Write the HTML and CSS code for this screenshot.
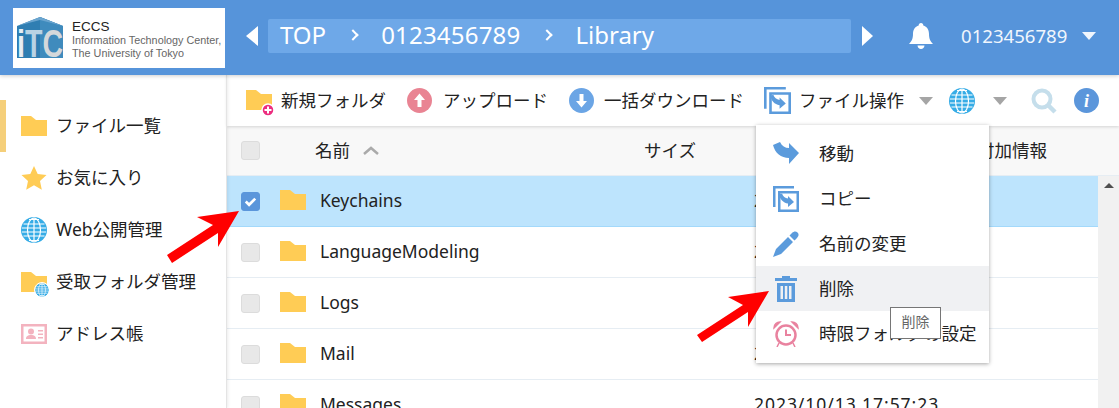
FILE: index.html
```html
<!DOCTYPE html>
<html lang="ja">
<head>
    <meta charset="UTF-8">
    <title>ECCS Cloud Storage</title>
    <link rel="stylesheet" href="styles.css">
</head>
<body>
    <svg class="defs" aria-hidden="true">
        <symbol id="folder" viewBox="0 0 26 20"><path d="M0 0h10l5 4h11v16H0z" fill="#ffcc55"/></symbol>
        <symbol id="globe" viewBox="0 0 26 26">
            <circle cx="13" cy="13" r="13" fill="#36ace6"/>
            <g fill="none" stroke="#fff" stroke-width="1.200">
                <ellipse cx="13" cy="13" rx="6.500" ry="12"/>
                <path d="M13 1v24M8 2.500h10M2.500 7h21M1 11h24M1 15h24M2.500 19h21M8 23.500h10"/>
            </g>
        </symbol>
        <symbol id="copy" viewBox="0 0 26 26">
            <path d="M0 0h21v2.500H2.500V21H0z" fill="#5b9bdc"/>
            <path d="M5 5h21v21H5zM7.500 7.500v16h16v-16z" fill="#5b9bdc" fill-rule="evenodd"/>
            <path d="M6 8.500l3-1c1 3 3 4.500 6 5V10l6 6-6 5v-3.500C10 17 7 13 6 8.500z" fill="#5b9bdc"/>
        </symbol>
    </svg>

    <header class="topbar">
        <div class="logo">
            <svg class="logo-mark" viewBox="0 -4 46 52">
                <path d="M0 9 23 0l23 9v32H0z" fill="#2f7eb2"/>
                <path d="M23 0l23 9v32H23z" fill="#3f8bbd"/>
                <path d="M0 9 23 3l23 6L23 0z" fill="#6ba5cf"/>
                <text x="0" y="40" class="logo-itc" textLength="46" lengthAdjust="spacingAndGlyphs"><tspan class="itc-i">i</tspan><tspan class="itc-t">T</tspan><tspan class="itc-c">C</tspan></text>
            </svg>
            <div class="logo-text">
                <div class="logo-name">ECCS</div>
                <div>Information Technology Center,</div>
                <div>The University of Tokyo</div>
            </div>
        </div>
        <span class="crumb-arrow crumb-left"></span>
        <nav class="crumbs">
            <span>TOP</span><i class="chev"></i>
            <span class="crumb-num">0123456789</span><i class="chev"></i>
            <span>Library</span>
        </nav>
        <span class="crumb-arrow crumb-right"></span>
        <svg class="bell" viewBox="0 0 24 26"><path d="M12 0c1.500 0 2.300 1 2.300 2.400C18 3.400 20 6.500 20 11c0 5 1.500 7.500 4 10H0c2.500-2.500 4-5 4-10 0-4.500 2-7.600 5.700-8.600C9.700 1 10.500 0 12 0zM8.500 22.500h7C15.300 24.800 13.900 26 12 26s-3.300-1.200-3.500-3.500z" fill="#fff"/></svg>
        <span class="user">0123456789</span>
        <span class="user-caret"></span>
    </header>

    <div class="main">
        <aside class="sidebar">
            <a class="side-item active"><svg class="side-icon"><use href="#folder"/></svg><span class="label">ファイル一覧</span></a>
            <a class="side-item">
                <svg class="side-icon" viewBox="0 0 26 26"><path d="m13 1 3.700 8 8.800 1-6.500 6 1.800 8.700L13 20.300 5.200 24.700 7 16 .5 10l8.800-1z" fill="#ffcc55"/></svg><span class="label">お気に入り</span>
            </a>
            <a class="side-item"><svg class="side-icon"><use href="#globe"/></svg><span class="label">Web公開管理</span></a>
            <a class="side-item">
                <span class="side-icon stack">
                    <svg class="side-icon"><use href="#folder"/></svg>
                    <svg class="mini-globe"><use href="#globe"/></svg>
                </span><span class="label">受取フォルダ管理</span>
            </a>
            <a class="side-item">
                <svg class="side-icon" viewBox="0 0 26 20">
                    <path d="M0 0h26v20H0zM2.500 2.500v15h21v-15z" fill="#f3b3bf" fill-rule="evenodd"/>
                    <circle cx="10" cy="7.500" r="3" fill="#f3b3bf"/>
                    <path d="M5 15c0-3 2-4 5-4s5 1 5 4zM17 6h5v1.500h-5zM17 9.500h5V11h-5zM17 13h5v1.500h-5z" fill="#f3b3bf"/>
                </svg><span class="label">アドレス帳</span>
            </a>
        </aside>

        <section class="content">
            <div class="toolbar">
                <a class="tool tool-new">
                    <span class="tool-folder">
                        <svg class="tool-folder-icon"><use href="#folder"/></svg>
                        <svg class="plus" viewBox="0 0 14 14"><circle cx="7" cy="7" r="6" fill="#ec2d7f" stroke="#fff" stroke-width="1.500"/><path d="M3.500 7h7M7 3.500v7" stroke="#fff" stroke-width="2"/></svg>
                    </span><span class="label">新規フォルダ</span>
                </a>
                <a class="tool tool-up">
                    <svg class="round-icon" viewBox="0 0 25 25"><circle cx="12.500" cy="12.500" r="12.500" fill="#e98493"/><path d="M12.500 5.500 18 12h-3.500v7h-4v-7H7z" fill="#fff"/></svg><span class="label">アップロード</span>
                </a>
                <a class="tool tool-down">
                    <svg class="round-icon" viewBox="0 0 25 25"><circle cx="12.500" cy="12.500" r="12.500" fill="#6ba5e5"/><path d="M12.500 19.500 18 13h-3.500V6h-4v7H7z" fill="#fff"/></svg><span class="label">一括ダウンロード</span>
                </a>
                <a class="tool tool-ops"><svg class="copy-icon"><use href="#copy"/></svg><span class="label">ファイル操作</span></a>
                <span class="caret caret-ops"></span>
                <svg class="tool-globe"><use href="#globe"/></svg>
                <span class="caret caret-globe"></span>
                <svg class="tool-search" viewBox="0 0 26 26"><circle cx="11" cy="11" r="8.500" fill="none" stroke="#c5deeb" stroke-width="4"/><path d="m17 17 7 7" stroke="#c5deeb" stroke-width="4.500"/></svg>
                <svg class="tool-info" viewBox="0 0 25 25"><circle cx="12.500" cy="12.500" r="12.500" fill="#5b96db"/><text x="12.500" y="18.500" class="info-i">i</text></svg>
            </div>

            <div class="table-head">
                <span class="check"></span>
                <span class="head-name label">名前</span>
                <svg class="sort" viewBox="0 0 16 9"><path d="M1 8l7-6 7 6" fill="none" stroke="#aaa" stroke-width="2.500"/></svg>
                <span class="head-size label">サイズ</span>
                <span class="head-date label"></span>
                <span class="head-extra label">付加情報</span>
            </div>

            <div class="table-body">
                <div class="rows">
                    <div class="row selected">
                        <span class="check checked"><svg viewBox="0 0 18 18"><path d="m4 9 3.500 3.500L14 6" fill="none" stroke="#fff" stroke-width="2.800"/></svg></span>
                        <svg class="row-folder"><use href="#folder"/></svg>
                        <span class="row-name label">Keychains</span>
                        <span class="row-date">2023/10/13 17:57:23</span>
                    </div>
                    <div class="row">
                        <span class="check"></span>
                        <svg class="row-folder"><use href="#folder"/></svg>
                        <span class="row-name label">LanguageModeling</span>
                        <span class="row-date">2023/10/13 17:57:23</span>
                    </div>
                    <div class="row">
                        <span class="check"></span>
                        <svg class="row-folder"><use href="#folder"/></svg>
                        <span class="row-name label">Logs</span>
                        <span class="row-date">2023/10/13 17:57:23</span>
                    </div>
                    <div class="row">
                        <span class="check"></span>
                        <svg class="row-folder"><use href="#folder"/></svg>
                        <span class="row-name label">Mail</span>
                        <span class="row-date">2023/10/13 17:57:23</span>
                    </div>
                    <div class="row">
                        <span class="check"></span>
                        <svg class="row-folder"><use href="#folder"/></svg>
                        <span class="row-name label">Messages</span>
                        <span class="row-date">2023/10/13 17:57:23</span>
                    </div>
                </div>
                <div class="scrollbar"><span class="scroll-up"></span></div>
            </div>
        </section>
    </div>

    <ul class="menu">
        <li class="menu-item">
            <svg class="menu-icon" viewBox="0 0 26 26"><path d="M0 4l7-3c2 4 5 6 9 6V2l10 10-10 11v-6C8 17 2 12 0 4z" fill="#5b9bdc"/></svg><span class="label">移動</span>
        </li>
        <li class="menu-item"><svg class="menu-icon"><use href="#copy"/></svg><span class="label">コピー</span></li>
        <li class="menu-item">
            <svg class="menu-icon" viewBox="0 0 26 26"><path d="M0 26l3-8L15 6l5 5L8 23zM16.500 4.500 19 2c2-2 4-2 5.500-.5S26 5 24 7l-2.500 2.500z" fill="#5b9bdc"/></svg><span class="label">名前の変更</span>
        </li>
        <li class="menu-item hover">
            <svg class="menu-icon" viewBox="-2 0 26 26"><path d="M7 0h8v2h7v3H0V2h7zM2 7h18v19H2zM5.500 10v13H8V10zM9.800 10v13h2.500V10zM14 10v13h2.500V10z" fill="#5b9bdc" fill-rule="evenodd"/></svg><span class="label">削除</span>
        </li>
        <li class="menu-item">
            <svg class="menu-icon" viewBox="0 0 26 26">
                <circle cx="13" cy="14" r="9.500" fill="none" stroke="#e9829f" stroke-width="2.500"/>
                <path d="M13 8.500V14h5" fill="none" stroke="#e9829f" stroke-width="2"/>
                <path d="M1 7c0-4 3-6 6-6zM25 7c0-4-3-6-6-6zM6 22l-2 4M20 22l2 4" fill="#e9829f" stroke="#e9829f" stroke-width="1.500"/>
            </svg><span class="label">時限フォルダの設定</span>
        </li>
    </ul>
    <div class="tooltip">削除</div>

    <svg class="red-arrow arrow-check" viewBox="0 0 80 60"><path d="M73 1 31 7l16 8L1 45l5 8 46-30 0 14z" fill="#f00"/></svg>
    <svg class="red-arrow arrow-delete" viewBox="0 0 80 60"><path d="M73 1 32 7l15 8L1 45l5 7 46-30 0 15z" fill="#f00"/></svg>
</body>
</html>
```

FILE: styles.css
```css
* {
    box-sizing: border-box;
}
html, body {
    height: 100%;
}
body {
    margin: 0;
    overflow: hidden;
    background-color: #fff;
    color: #222;
    font-family: "Noto Sans", "Noto Sans CJK JP", sans-serif;
    font-size: 17.5px;
}
.defs {
    width: 0;
    height: 0;
    display: block;
}
/* the text sits a little above the middle of its row */
.label {
    margin-bottom: 3px;
}

/* top bar */
.topbar {
    display: flex;
    align-items: center;
    height: 75px;
    background-color: #5694da;
    color: #fff;
    padding-left: 13px;
    padding-bottom: 4px;
    position: relative;
    z-index: 2;
    box-shadow: 0 1px 4px rgba(0, 0, 0, 0.2);
}
.logo {
    display: flex;
    align-items: center;
    width: 212px;
    height: 60px;
    background-color: #fff;
    padding-left: 4px;
    margin-top: 4px;
    color: #666;
    font-family: "Liberation Sans", sans-serif;
    font-size: 10.8px;
    line-height: 13px;
}
.logo-mark {
    width: 46px;
    height: 52px;
    flex: none;
    margin-top: 2px;
}
.logo-itc {
    font-family: "Liberation Sans", sans-serif;
    font-size: 39px;
    font-weight: bold;
}
.itc-i {
    fill: #e8eef2;
}
.itc-t {
    fill: #b9d3e4;
}
.itc-c {
    fill: #d4d8db;
}
.logo-text {
    margin-left: 9px;
    margin-top: 3px;
    white-space: nowrap;
}
.logo-name {
    color: #222;
    font-size: 13.5px;
    line-height: 15px;
}
.crumb-arrow {
    width: 0;
    height: 0;
    border-top: 10px solid transparent;
    border-bottom: 10px solid transparent;
}
.crumb-left {
    margin-left: 21px;
    border-right: 12px solid #fff;
}
.crumb-right {
    margin-left: 11px;
    border-left: 11px solid #fff;
}
.crumbs {
    display: flex;
    align-items: center;
    width: 583px;
    height: 34px;
    margin-left: 10px;
    padding-left: 12px;
    padding-bottom: 2px;
    background-color: #6ea8e8;
    border-radius: 2px;
    font-size: 24px;
}
.crumb-num {
    letter-spacing: 0.2px;
}
.chev {
    width: 8px;
    height: 8px;
    margin: 0 24px 0 23px;
    border-top: 2px solid #fff;
    border-right: 2px solid #fff;
    transform: rotate(45deg);
}
.bell {
    width: 24px;
    height: 26px;
    margin-left: 36px;
}
.user {
    margin-left: 28px;
    font-size: 18.6px;
    color: #f0f6fd;
}
.user-caret {
    width: 0;
    height: 0;
    margin-left: 15px;
    border-left: 7px solid transparent;
    border-right: 7px solid transparent;
    border-top: 8px solid #f0f6fd;
}

/* page below the bar */
.main {
    display: flex;
    height: 333px;
}
.sidebar {
    width: 227px;
    flex: none;
    padding-top: 25px;
    border-right: 1px solid #e4e4e4;
    box-shadow: 1px 0 3px rgba(0, 0, 0, 0.08);
    position: relative;
    z-index: 1;
}
.side-item {
    display: flex;
    align-items: center;
    height: 52px;
    padding-left: 21px;
}
.side-item.active {
    padding-left: 15px;
    border-left: 6px solid #f5cf7a;
}
.side-icon {
    width: 26px;
    height: 26px;
    margin-right: 9px;
    flex: none;
}
.stack {
    position: relative;
    display: block;
}
.stack .side-icon {
    display: block;
}
.mini-globe {
    position: absolute;
    right: -2px;
    bottom: -2px;
    width: 14px;
    height: 14px;
    border-radius: 50%;
    background-color: #fff;
    outline: 1px solid #fff;
}

/* toolbar */
.content {
    flex: 1;
    min-width: 0;
}
.toolbar {
    display: flex;
    align-items: center;
    height: 51px;
    padding-left: 19px;
    box-shadow: 0 1px 3px rgba(0, 0, 0, 0.15);
    position: relative;
}
.tool {
    display: flex;
    align-items: center;
    white-space: nowrap;
}
.tool-folder {
    position: relative;
    width: 27px;
    height: 27px;
    margin-right: 8px;
}
.tool-folder-icon {
    width: 26px;
    height: 20px;
    display: block;
    margin-top: 3px;
}
.plus {
    position: absolute;
    right: -2px;
    bottom: -3px;
    width: 14px;
    height: 14px;
}
.round-icon {
    width: 25px;
    height: 25px;
    margin-right: 11px;
}
.tool-up {
    margin-left: 21px;
}
.tool-down {
    margin-left: 21px;
}
.tool-down .round-icon {
    margin-right: 10px;
}
.tool-ops {
    margin-left: 20px;
}
.copy-icon {
    width: 27px;
    height: 27px;
    margin-right: 8px;
}
.caret {
    width: 0;
    height: 0;
    border-left: 7px solid transparent;
    border-right: 7px solid transparent;
    border-top: 8px solid #a5a5a5;
}
.caret-ops {
    margin-left: 15px;
}
.tool-globe {
    width: 26px;
    height: 26px;
    margin-left: 16px;
}
.caret-globe {
    margin-left: 18px;
}
.tool-search {
    width: 26px;
    height: 26px;
    margin-left: 24px;
}
.tool-info {
    width: 25px;
    height: 25px;
    margin-left: 17px;
}
.info-i {
    font-family: "Liberation Serif", serif;
    font-size: 18px;
    font-style: italic;
    font-weight: bold;
    fill: #fff;
    text-anchor: middle;
}

/* table */
.table-head {
    display: flex;
    align-items: center;
    height: 50px;
    padding-left: 14px;
    background-color: #f8f8f8;
    border-bottom: 1px solid #e6edf3;
}
.check {
    width: 19px;
    height: 19px;
    flex: none;
    display: block;
    background-color: #e8e8e8;
    border: 1px solid #dcdcdc;
    border-radius: 3px;
}
.checked {
    background-color: #5b96db;
    border-color: #5b96db;
}
.checked svg {
    display: block;
    width: 17px;
    height: 17px;
}
.head-name {
    margin-left: 55px;
    width: 48px;
}
.sort {
    width: 16px;
    height: 9px;
}
.head-size {
    margin-left: 265px;
    width: 110px;
}
.head-date {
    width: 223px;
}
.head-extra {
    white-space: nowrap;
}
.table-body {
    display: flex;
    height: 232px;
    overflow: hidden;
}
.rows {
    flex: 1;
    min-width: 0;
}
.row {
    display: flex;
    align-items: center;
    height: 51px;
    padding-left: 14px;
    border-bottom: 1px solid #e6edf3;
    white-space: nowrap;
}
.row.selected {
    background-color: #bde4fd;
    border-bottom-color: #a3d9fb;
}
.row-folder {
    width: 26px;
    height: 20px;
    margin-left: 20px;
    margin-bottom: 2px;
    flex: none;
}
.row-name {
    margin-left: 14px;
    width: 434px;
    flex: none;
}
.row-date {
    letter-spacing: 0.95px;
    margin-bottom: 3px;
}
.scrollbar {
    width: 21px;
    flex: none;
    background-color: #f1f1f1;
    padding-top: 7px;
}
.scroll-up {
    display: block;
    width: 0;
    height: 0;
    margin: 0 auto;
    border-left: 5px solid transparent;
    border-right: 5px solid transparent;
    border-bottom: 5px solid #505050;
}

/* dropdown and what floats over the table */
.menu {
    position: absolute;
    left: 756px;
    top: 125px;
    z-index: 3;
    width: 233px;
    height: 238px;
    margin: 0;
    padding: 6px 0 0;
    list-style: none;
    background-color: #fff;
    box-shadow: 0 1px 4px rgba(0, 0, 0, 0.35);
}
.menu-item {
    display: flex;
    align-items: center;
    height: 45px;
    padding-left: 17px;
    white-space: nowrap;
}
.menu-item.hover {
    background-color: #f0f1f3;
}
.menu-icon {
    width: 26px;
    height: 26px;
    margin-right: 20px;
    flex: none;
}
.tooltip {
    position: absolute;
    left: 890px;
    top: 307px;
    z-index: 4;
    width: 51px;
    height: 32px;
    padding-top: 3px;
    text-align: center;
    background-color: #fff;
    border: 1px solid #767676;
    color: #666;
    font-size: 14px;
}
.red-arrow {
    position: absolute;
    z-index: 5;
    width: 80px;
    height: 60px;
}
.arrow-check {
    left: 166px;
    top: 210px;
}
.arrow-delete {
    left: 696px;
    top: 290px;
}
```
